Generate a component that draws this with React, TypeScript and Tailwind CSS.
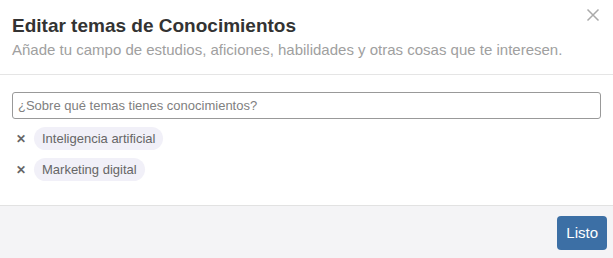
import React from 'react';

export default function App() {
  const topics = ['Inteligencia artificial', 'Marketing digital'];

  return (
    <div className="w-[613px] h-[258px] bg-white flex flex-col font-['Liberation_Sans',Arial,sans-serif]">
      {/* Header */}
      <div className="relative px-3 pt-[13px] h-[75px] border-b border-[#e5e5e5]">
        <h2 className="text-[19px] leading-[25px] font-bold text-[#333]">Editar temas de Conocimientos</h2>
        <p className="mt-[2px] text-[15px] leading-[20px] text-[#a0a0a0]">
          Añade tu campo de estudios, aficiones, habilidades y otras cosas que te interesen.
        </p>
        <button className="absolute right-[13px] top-[8px] w-[14px] h-[14px] text-[#aaa]">
          <svg viewBox="0 0 14 14" className="w-[14px] h-[14px]" fill="none" stroke="currentColor" strokeWidth="1.5">
            <path d="M1.5 1.5 L12.5 12.5 M12.5 1.5 L1.5 12.5" />
          </svg>
        </button>
      </div>

      {/* Body */}
      <div className="flex-1 px-3 pt-[17px]">
        <div className="h-[27px] border border-[#999] rounded-[3px] flex items-center px-[5px]">
          <span className="text-[13px] text-[#808080]">¿Sobre qué temas tienes conocimientos?</span>
        </div>
        <div className="mt-[8px] flex flex-col gap-[8px]">
          {topics.map((t) => (
            <div key={t} className="flex items-center gap-[8px] pl-[4px]">
              <span className="text-[12px] font-bold text-[#666] leading-none">✕</span>
              <span className="h-[23px] px-[8px] flex items-center rounded-full bg-[#f1f0f8] text-[13px] text-[#666]">
                {t}
              </span>
            </div>
          ))}
        </div>
      </div>

      {/* Footer */}
      <div className="h-[53px] border-t border-[#e2e2e2] bg-[#f4f4f6] flex items-center justify-end px-[6px] pt-[2px]">
        <button className="h-[34px] px-[9px] rounded-[4px] bg-[#3c6fa5] text-white text-[15px]">Listo</button>
      </div>
    </div>
  );
}
